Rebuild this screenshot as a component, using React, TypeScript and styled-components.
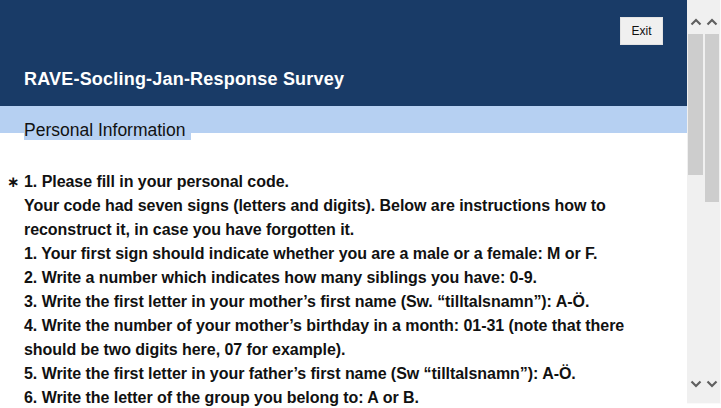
import React from "react";
import styled, { createGlobalStyle } from "styled-components";

const Global = createGlobalStyle`
  html, body { margin: 0; padding: 0; background: #ffffff; }
  body { font-family: "Liberation Sans", Arial, sans-serif; }
`;

const Page = styled.div`
  display: flex;
  width: 721px;
  height: 408px;
  overflow: hidden;
  background: #ffffff;
`;

const Main = styled.div`
  flex: 1;
  display: flex;
  flex-direction: column;
  min-width: 0;
  overflow: hidden;
`;

const Header = styled.header`
  flex-shrink: 0;
  height: 106px;
  box-sizing: border-box;
  background: #193b67;
  padding: 17px 24px 0 24px;
  display: flex;
  flex-direction: column;
`;

const ExitRow = styled.div`
  display: flex;
  justify-content: flex-end;
`;

const ExitButton = styled.button`
  width: 43px;
  height: 28px;
  box-sizing: border-box;
  background: #f0f0f0;
  border: 1px solid #e3e3e3;
  border-radius: 0;
  font-family: "Liberation Sans", Arial, sans-serif;
  font-size: 12px;
  color: #111;
  padding: 0;
`;

const Title = styled.h1`
  margin: 23px 0 0 0;
  font-size: 18px;
  line-height: 22px;
  letter-spacing: 0.2px;
  font-weight: bold;
  color: #ffffff;
`;

const Band = styled.div`
  flex-shrink: 0;
  height: 27px;
  background: #b6d0f2;
  padding: 11px 0 0 24px;
  box-sizing: border-box;
  overflow: visible;
`;

const SectionTitle = styled.span`
  display: inline-block;
  background: #b6d0f2;
  font-size: 17.5px;
  line-height: 19px;
  padding: 4px 6px 0 0;
  color: #111;
`;

const Content = styled.div`
  flex-shrink: 0;
  padding: 37px 0 0 0;
  display: flex;
`;

const Required = styled.span`
  width: 24px;
  box-sizing: border-box;
  padding-left: 7px;
  font-size: 15px;
  font-weight: bold;
  line-height: 24px;
  color: #111;
  font-family: "DejaVu Sans", sans-serif;
`;

const QuestionText = styled.div`
  font-size: 16px;
  font-weight: bold;
  line-height: 24px;
  letter-spacing: -0.05px;
  color: #111;
`;

const ScrollBar = styled.div<{ $edge?: boolean }>`
  flex-shrink: 0;
  width: 17px;
  height: 404px;
  background: #f0f0f0;
  display: flex;
  flex-direction: column;
  box-sizing: border-box;
  border-right: ${(p) => (p.$edge ? "1px solid #fafafa" : "none")};
  border-bottom: 1px solid #fafafa;
`;

const ArrowBox = styled.div<{ $top: number }>`
  height: 34px;
  box-sizing: border-box;
  padding-top: ${(p) => p.$top}px;
  display: flex;
  justify-content: center;
  align-items: flex-start;
  flex-shrink: 0;
`;

const Track = styled.div`
  flex: 1;
  display: flex;
  flex-direction: column;
`;

const Thumb = styled.div<{ $h: number }>`
  height: ${(p) => p.$h}px;
  margin: 0 1px;
  background: #cdcdcd;
`;

const Chevron = ({ up }: { up?: boolean }) => (
  <svg width="12" height="8" viewBox="0 0 12 8">
    <polyline
      points={up ? "1.5,6.5 6,2 10.5,6.5" : "1.5,1.5 6,6 10.5,1.5"}
      fill="none"
      stroke="#606060"
      strokeWidth="2.2"
    />
  </svg>
);

const Scroller = ({ thumb, edge }: { thumb: number; edge?: boolean }) => (
  <ScrollBar $edge={edge}>
    <ArrowBox $top={18}>
      <Chevron up />
    </ArrowBox>
    <Track>
      <Thumb $h={thumb} />
    </Track>
    <ArrowBox $top={11}>
      <Chevron />
    </ArrowBox>
  </ScrollBar>
);

export default function App() {
  return (
    <>
      <Global />
      <Page>
        <Main>
          <Header>
            <ExitRow>
              <ExitButton>Exit</ExitButton>
            </ExitRow>
            <Title>RAVE-Socling-Jan-Response Survey</Title>
          </Header>
          <Band>
            <SectionTitle>Personal Information</SectionTitle>
          </Band>
          <Content>
            <Required>∗</Required>
            <QuestionText>
              1. Please fill in your personal code.
              <br />
              Your code had seven signs (letters and digits). Below are instructions how to
              <br />
              reconstruct it, in case you have forgotten it.
              <br />
              1. Your first sign should indicate whether you are a male or a female: M or F.
              <br />
              2. Write a number which indicates how many siblings you have: 0-9.
              <br />
              3. Write the first letter in your mother’s first name (Sw. “tilltalsnamn”): A-Ö.
              <br />
              4. Write the number of your mother’s birthday in a month: 01-31 (note that there
              <br />
              should be two digits here, 07 for example).
              <br />
              5. Write the first letter in your father’s first name (Sw “tilltalsnamn”): A-Ö.
              <br />
              6. Write the letter of the group you belong to: A or B.
            </QuestionText>
          </Content>
        </Main>
        <Scroller thumb={141} />
        <Scroller thumb={168} edge />
      </Page>
    </>
  );
}
